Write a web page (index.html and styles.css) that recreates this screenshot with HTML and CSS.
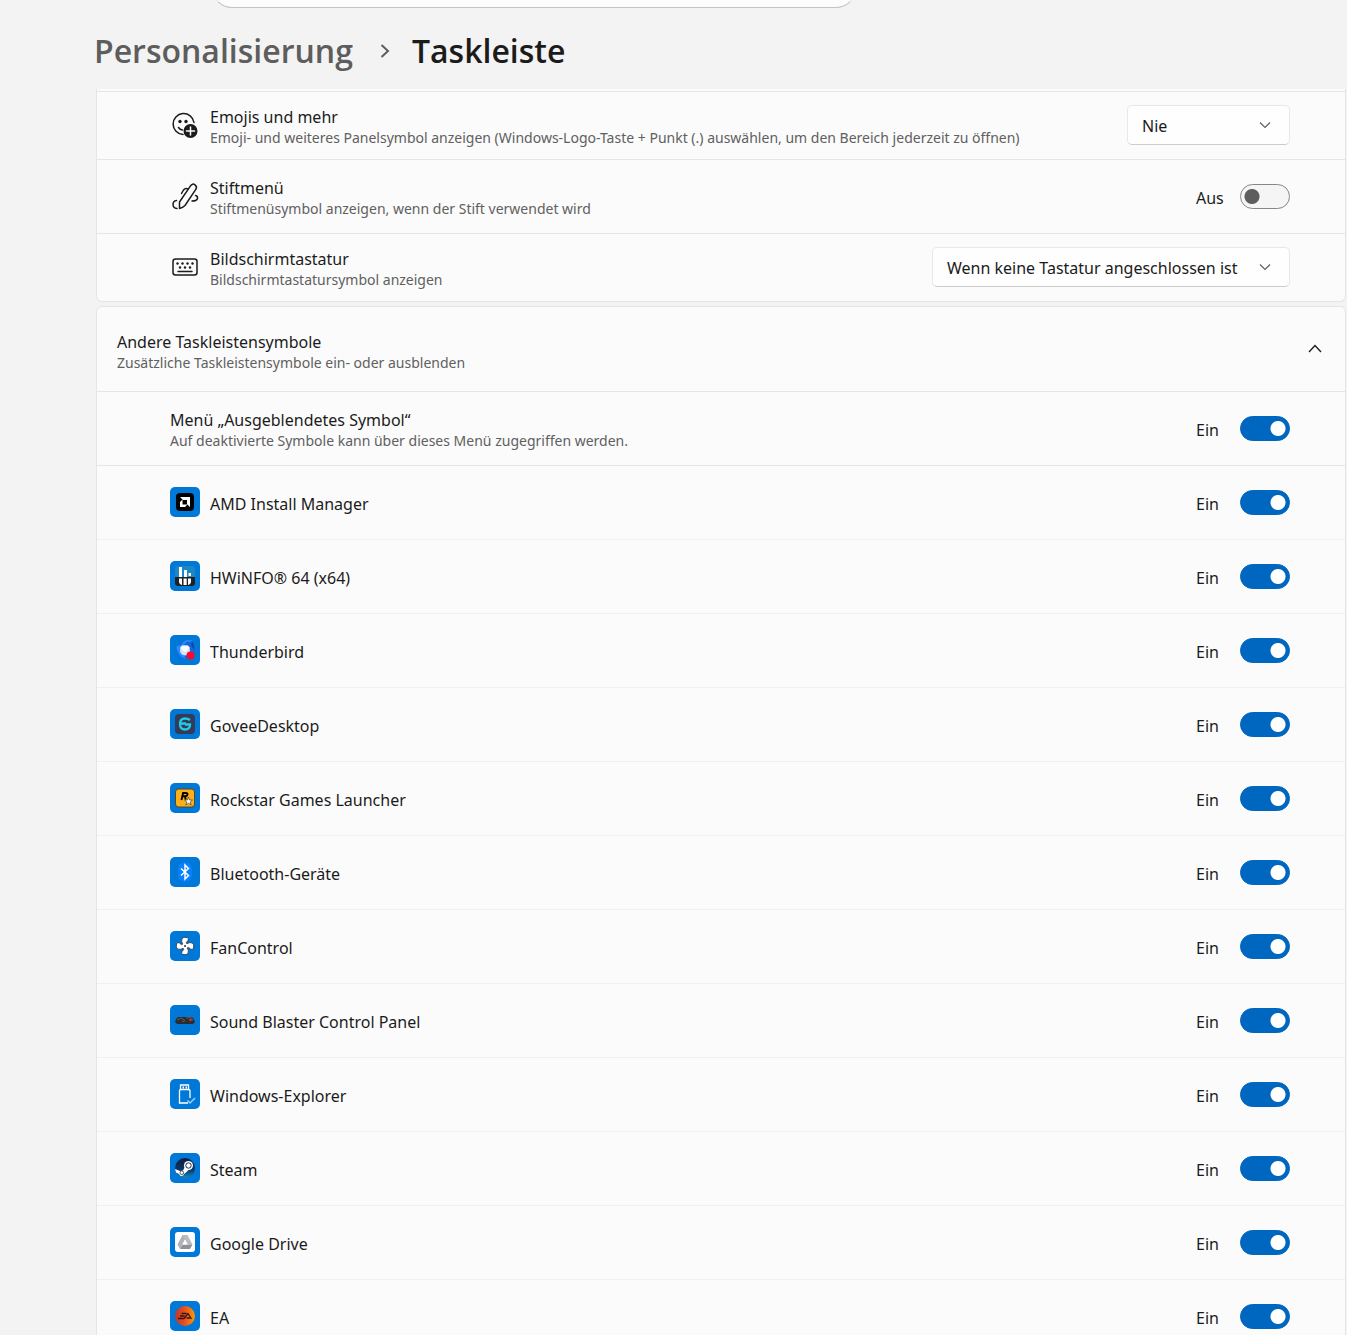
FILE: index.html
```html
<!DOCTYPE html>
<html lang="de">
<head>
<meta charset="utf-8">
<meta name="viewport" content="width=device-width, initial-scale=1">
<title>Personalisierung – Taskleiste</title>
<link rel="stylesheet" href="styles.css">
</head>
<body>
<div class="app">
  <div class="search-bar"><input class="search" type="search" aria-label="Einstellung suchen"></div>
  <nav class="breadcrumb" aria-label="Navigationspfad">
    <a class="crumb" href="#personalisierung">Personalisierung</a>
    <svg class="crumb-arrow" viewBox="0 0 10 16"><path d="M1.500 2 8 8l-6.500 6"/></svg>
    <h1 class="crumb-current">Taskleiste</h1>
  </nav>
  <main class="content">
    <section class="card card-continued">
      <div class="row row-short">
        <svg class="icon line-icon" viewBox="0 0 30 30"><path d="M13 24.500A10.500 10.500 0 1 1 24 12.500M8.500 17.500q1.500 2.500 4 2.500"/><circle class="fill" cx="10" cy="11.500" r="1.700"/><circle class="fill" cx="16" cy="11.500" r="1.700"/><circle class="fill" cx="20.500" cy="21" r="7"/><path class="plus" d="M20.500 17v8M16.500 21h8"/></svg>
        <div class="text"><label class="title" for="emoji">Emojis und mehr</label><span class="sub">Emoji- und weiteres Panelsymbol anzeigen (Windows-Logo-Taste + Punkt (.) auswählen, um den Bereich jederzeit zu öffnen)</span></div>
        <div class="select-box"><select class="select select-small" id="emoji"><option>Nie</option></select><svg class="chevron" viewBox="0 0 12 8"><path d="m1 1.500 5 5 5-5"/></svg></div>
      </div>
      <div class="row">
        <svg class="icon line-icon" viewBox="0 0 30 30"><path d="M9.500 27.500V21L20.500 4.800q2-2.800 4.500-1 2.500 2 .8 4.600L15 24.500q-2.500 2.500-5.500 3M11.500 12.500l2-3.500q2-2.500 4.500-1M6.500 19.500Q3 20 3 23.500t4 4M25.500 14.500q2.500.5 2 3-.5 2.500-5.500 2.500"/></svg>
        <div class="text"><label class="title" for="pen">Stiftmenü</label><span class="sub">Stiftmenüsymbol anzeigen, wenn der Stift verwendet wird</span></div>
        <span class="state">Aus</span><input class="switch" type="checkbox" role="switch" id="pen">
      </div>
      <div class="row row-short">
        <svg class="icon line-icon" viewBox="0 0 30 30"><rect x="3" y="7" width="24" height="16" rx="2.500"/><path d="M8 19.500h14"/><g class="fill"><circle cx="7.500" cy="11.500" r="1.200"/><circle cx="12.500" cy="11.500" r="1.200"/><circle cx="17.500" cy="11.500" r="1.200"/><circle cx="22.500" cy="11.500" r="1.200"/><circle cx="10" cy="15.500" r="1.200"/><circle cx="15" cy="15.500" r="1.200"/><circle cx="20" cy="15.500" r="1.200"/></g></svg>
        <div class="text"><label class="title" for="keyboard">Bildschirmtastatur</label><span class="sub">Bildschirmtastatursymbol anzeigen</span></div>
        <div class="select-box"><select class="select select-large" id="keyboard"><option>Wenn keine Tastatur angeschlossen ist</option></select><svg class="chevron" viewBox="0 0 12 8"><path d="m1 1.500 5 5 5-5"/></svg></div>
      </div>
    </section>

    <section class="card">
      <button class="card-head" type="button" aria-expanded="true">
        <span class="text"><span class="title">Andere Taskleistensymbole</span><span class="sub">Zusätzliche Taskleistensymbole ein- oder ausblenden</span></span>
        <svg class="expander" viewBox="0 0 14 10"><path d="m1 8 6-6.500L13 8"/></svg>
      </button>
      <div class="row row-strong">
        <div class="text"><label class="title" for="hidden">Menü „Ausgeblendetes Symbol“</label><span class="sub">Auf deaktivierte Symbole kann über dieses Menü zugegriffen werden.</span></div>
        <span class="state">Ein</span><input class="switch" type="checkbox" role="switch" id="hidden" checked>
      </div>
      <div class="row">
        <svg class="icon app-icon" viewBox="0 0 30 30"><rect x="6" y="6" width="18" height="18" rx="4" fill="#000"/><path d="M10 10h10v10l-3-3v-4h-4zM10 15l2.500-2.500v5h5L15 20h-5z" fill="#fff"/></svg>
        <label class="title" for="a1">AMD Install Manager</label><span class="state">Ein</span><input class="switch" type="checkbox" role="switch" id="a1" checked>
      </div>
      <div class="row">
        <svg class="icon app-icon" viewBox="0 0 30 30"><rect x="5" y="5" width="20" height="20" rx="3" fill="#1c87c5"/><path d="M5 16h20v6q0 3-3 3H8q-3 0-3-3z" fill="#202124"/><path d="M9 6h3v10H9zM14 9h3v7h-3zM18.500 12h2.500v3h-2.500zM9 17.500h3V24q-3-1-3-3.500zM13.500 17.500h3.200V24h-3.200zM18 17.500h3v3q0 2.500-3 3.500z" fill="#fff"/></svg>
        <label class="title" for="a2">HWiNFO® 64 (x64)</label><span class="state">Ein</span><input class="switch" type="checkbox" role="switch" id="a2" checked>
      </div>
      <div class="row">
        <svg class="icon app-icon" viewBox="0 0 30 30"><circle cx="15.500" cy="15" r="9" fill="#1766df"/><path d="M6.500 11q0 7 5 11l4 2-4-12 5-5 7-1q-9-3-12 4z" fill="#278cff"/><circle cx="15" cy="15.500" r="5" fill="#cfe6ff"/><path d="m10 13 5 4 5-4-2-2.500h-6z" fill="#fff"/><path d="M22 6q3 4 2 9l-3-5z" fill="#1647a8"/><circle cx="20.500" cy="20.500" r="4" fill="#ff062f"/></svg>
        <label class="title" for="a3">Thunderbird</label><span class="state">Ein</span><input class="switch" type="checkbox" role="switch" id="a3" checked>
      </div>
      <div class="row">
        <svg class="icon app-icon" viewBox="0 0 30 30"><rect x="5" y="5" width="20" height="20" rx="4" fill="#353a57"/><path d="M20 11q-2-1.500-5-1.500-5 0-5 5.500t5 5.500 5-5h-5M9 14.500h7" fill="none" stroke="#20c9e5" stroke-width="2.300"/></svg>
        <label class="title" for="a4">GoveeDesktop</label><span class="state">Ein</span><input class="switch" type="checkbox" role="switch" id="a4" checked>
      </div>
      <div class="row">
        <svg class="icon app-icon" viewBox="0 0 30 30"><rect x="5.500" y="6" width="19" height="18" rx="3" fill="#fcaf17" stroke="#51452b"/><path d="m11.500 17 1.600-7h2.600q2.300 0 1.700 1.800-.4 1.500-2.200 1.500h-2.400M15 13.500l.7 3" fill="none" stroke="#000" stroke-width="1.900"/><path d="m18.500 14 1 3h3l-2.300 2 1 3-2.700-1.700L15.800 22l1-3-2.300-2h3z" fill="#fff" stroke="#4b4029" stroke-width=".7"/></svg>
        <label class="title" for="a5">Rockstar Games Launcher</label><span class="state">Ein</span><input class="switch" type="checkbox" role="switch" id="a5" checked>
      </div>
      <div class="row">
        <svg class="icon app-icon" viewBox="0 0 30 30"><rect x="8" y="5" width="14" height="20" rx="7" fill="#0881ff"/><path d="m11 11.500 7.500 7L15 22V8l3.500 3.500-7.500 7" fill="none" stroke="#fff" stroke-width="1.500"/></svg>
        <label class="title" for="a6">Bluetooth-Geräte</label><span class="state">Ein</span><input class="switch" type="checkbox" role="switch" id="a6" checked>
      </div>
      <div class="row">
        <svg class="icon app-icon" viewBox="0 0 30 30"><g fill="#fff" stroke="#222b35" stroke-width=".8"><path id="blade" d="M13.500 14.500Q10.500 10 12 7.500q1.500-2 5-1 2.500 1 1 3-2.500 1.500-1.500 5z"/><use href="#blade" transform="rotate(90 15 15)"/><use href="#blade" transform="rotate(180 15 15)"/><use href="#blade" transform="rotate(270 15 15)"/></g><circle cx="15" cy="15" r="2.800" fill="#fff"/><circle cx="15" cy="15" r="1" fill="#333"/></svg>
        <label class="title" for="a7">FanControl</label><span class="state">Ein</span><input class="switch" type="checkbox" role="switch" id="a7" checked>
      </div>
      <div class="row">
        <svg class="icon app-icon" viewBox="0 0 30 30"><path d="M5 17q0-3 3-5h14q2 1.500 3 5l-2 2H7z" fill="#292c31"/><path d="m7 15 4-2 4 2.500-3 1.500M16 13l5-.5 2 3" fill="none" stroke="#5c5d5e"/><path d="m18.500 15 2-1.500 2 1.500-2 1.500z" fill="#d52c2d"/></svg>
        <label class="title" for="a8">Sound Blaster Control Panel</label><span class="state">Ein</span><input class="switch" type="checkbox" role="switch" id="a8" checked>
      </div>
      <div class="row">
        <svg class="icon app-icon" viewBox="0 0 30 30"><path d="M10.500 10.500V6h8v4.500M18 24H9.500V12q0-1.500 1.500-1.500h7.500q1.500 0 1.500 1.500v7" fill="none" stroke="#fff" stroke-width="1.300"/><path d="M12.500 7.500h1.500v2h-1.500zM15.500 7.500H17v2h-1.500z" fill="#fff"/><path d="m17.500 21.500 2.500 2.500 5-5" fill="none" stroke="#9bd0fb" stroke-width="1.500"/></svg>
        <label class="title" for="a9">Windows-Explorer</label><span class="state">Ein</span><input class="switch" type="checkbox" role="switch" id="a9" checked>
      </div>
      <div class="row">
        <svg class="icon app-icon" viewBox="0 0 30 30"><defs><linearGradient id="steam" x2="0" y2="1"><stop stop-color="#111c3d"/><stop offset=".6" stop-color="#0c3766"/><stop offset="1" stop-color="#188bbd"/></linearGradient></defs><circle cx="15" cy="15" r="10" fill="url(#steam)"/><path d="m5 16 5 2 3-.5 2-4 5 2-4 4-2 1.500q-1 3-4 1.500l-1-1.500-3-1.500z" fill="#fff"/><circle cx="18.500" cy="12.500" r="4.500" fill="#fff"/><circle cx="18.500" cy="12.500" r="2.700" fill="none" stroke="#183050" stroke-width="1"/><circle cx="11.800" cy="19.700" r="1.800" fill="none" stroke="#183050" stroke-width=".8"/></svg>
        <label class="title" for="a10">Steam</label><span class="state">Ein</span><input class="switch" type="checkbox" role="switch" id="a10" checked>
      </div>
      <div class="row">
        <svg class="icon app-icon" viewBox="0 0 30 30"><rect x="5" y="5" width="20" height="20" rx="3" fill="#fff"/><path d="M12.500 8h5l-7.500 14-2.500-4.500z" fill="#aeb1b5"/><path d="M12.500 8h5l5 9.500h-5z" fill="#b9bbbf"/><path d="M12.500 17.500h10L20 22H10z" fill="#8f9297"/><path d="m15 12.500 2.700 5h-5.400z" fill="#fff"/></svg>
        <label class="title" for="a11">Google Drive</label><span class="state">Ein</span><input class="switch" type="checkbox" role="switch" id="a11" checked>
      </div>
      <div class="row">
        <svg class="icon app-icon" viewBox="0 0 30 30"><defs><linearGradient id="ea"><stop stop-color="#bd342b"/><stop offset=".5" stop-color="#e95320"/><stop offset="1" stop-color="#ff9700"/></linearGradient></defs><circle cx="15" cy="15" r="10" fill="url(#ea)"/><path d="M11.500 12.500h5M10 15h4.500M8 17.500h6l4-5 3.500 5.500M16.500 17h3.500" fill="none" stroke="#30161b" stroke-width="1.300"/></svg>
        <label class="title" for="a12">EA</label><span class="state">Ein</span><input class="switch" type="checkbox" role="switch" id="a12" checked>
      </div>
    </section>
  </main>
</div>
</body>
</html>
```
FILE: styles.css
```css
* { box-sizing: border-box; }
body { margin: 0; background: #f3f3f3; color: #1b1b1b; font: 16px/21px "Noto Sans", "Open Sans", sans-serif; }
.app { display: flex; flex-direction: column; height: 100vh; overflow: hidden; }

.search-bar { display: flex; flex: none; align-items: flex-end; height: 8px; padding: 0 16px 0 212px; overflow: hidden; }
.search { flex: 0 1 644px; min-width: 0; height: 40px; border: 1px solid #e5e5e5; border-bottom-color: #c4c4c4; border-radius: 20px; background: #fcfcfc; }

.breadcrumb { display: flex; flex: none; align-items: center; height: 81px; padding: 4px 0 0 94px; font-family: "Open Sans", "Noto Sans", sans-serif; font-size: 32px; line-height: 44px; font-weight: 600; }
.crumb { color: #5d5d5d; text-decoration: none; }
.crumb-arrow { width: 10px; height: 16px; margin: 0 22px 0 27px; fill: none; stroke: #5d5d5d; stroke-width: 2; }
.crumb-current { margin: 0; font: inherit; }

.content { flex: 1; min-height: 0; padding: 0 1px 0 96px; overflow: hidden; }
.card { margin-bottom: 4px; border: 1px solid #e5e5e5; border-radius: 6px; background: #fbfbfb; }
.card-continued { padding-top: 2px; border-top: 0; border-radius: 0 0 6px 6px; }

.row { display: flex; align-items: center; height: 74px; padding: 0 55px 0 73px; border-top: 1px solid #f0f0f0; }
.row-short { height: 68px; }
.card-continued .row, .row-strong, .row-strong + .row { border-color: #e5e5e5; }
.icon { flex: none; width: 30px; height: 30px; margin: 0 10px 2px 0; }
.app-icon { border-radius: 5px; background: #0078d7; }
.line-icon { fill: none; stroke: #1b1b1b; stroke-width: 1.500; stroke-linecap: round; stroke-linejoin: round; }
.line-icon .fill { fill: #1b1b1b; stroke: none; }
.line-icon .plus { stroke: #fff; }

.text { display: flex; flex: 1; flex-direction: column; min-width: 0; padding-top: 3px; }
.row > .title { flex: 1; padding-top: 4px; }
.sub { color: #606060; font-size: 14px; line-height: 20px; }
.state { width: 44px; padding-top: 4px; }

.switch { flex: none; width: 50px; height: 25px; margin: 0; appearance: none; border: 1px solid #868686; border-radius: 13px; background: radial-gradient(circle at 11px 50%, #5d5d5d 7px, transparent 8px) #f5f5f5; }
.switch:checked { border-color: #0067c0; background: radial-gradient(circle at 37px 50%, #fff 7px, transparent 8px) #0067c0; }

.select-box { position: relative; flex: none; margin-bottom: 2px; }
.select { display: block; height: 40px; padding: 3px 44px 0 14px; appearance: none; border: 1px solid #e8e8e8; border-bottom-color: #ccc; border-radius: 5px; background: #fefefe; color: inherit; font: inherit; }
.select-small { width: 163px; }
.select-large { width: 358px; }
.chevron { position: absolute; top: 16px; right: 19px; width: 12px; height: 8px; fill: none; stroke: #606060; stroke-width: 1.200; pointer-events: none; }

.card-head { display: flex; align-items: center; width: 100%; height: 84px; padding: 0 23px 0 20px; border: 0; background: none; color: inherit; font: inherit; text-align: left; }
.card-head .text { padding-top: 7px; }
.expander { width: 14px; height: 10px; fill: none; stroke: #1b1b1b; stroke-width: 1.300; }
```
